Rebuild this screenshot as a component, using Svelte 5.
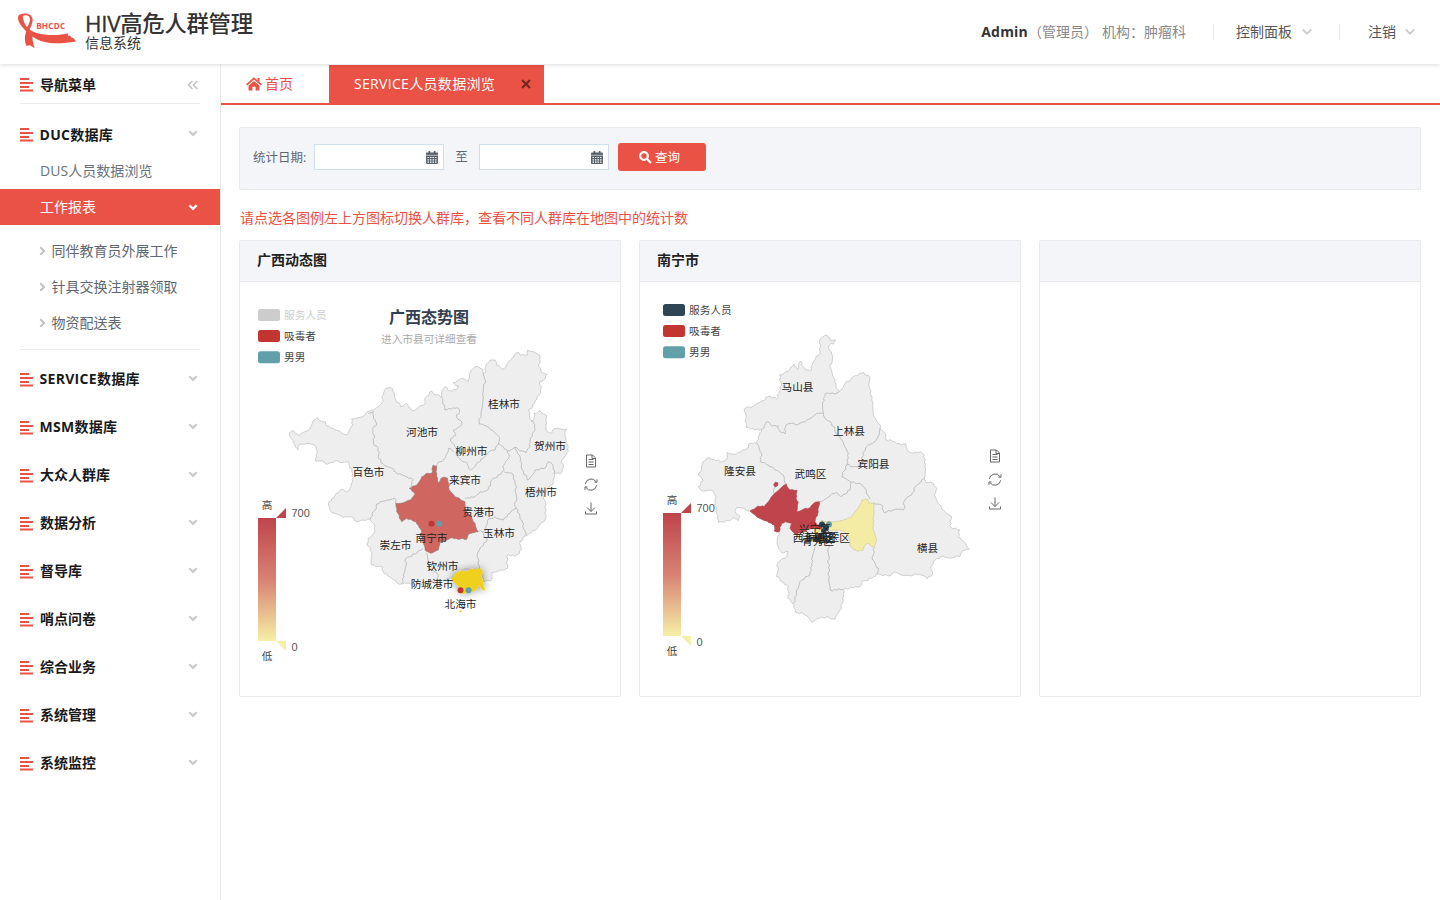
<script>
  const menus = ['SERVICE数据库', 'MSM数据库', '大众人群库', '数据分析', '督导库', '哨点问卷', '综合业务', '系统管理', '系统监控'];
  const subs = ['同伴教育员外展工作', '针具交换注射器领取', '物资配送表'];

  // Turns "x,y x,y ..." into a path whose segments wobble like a surveyed border.
  function rough(str, closed = false, amp = 1.1) {
    const pts = str.trim().split(/\s+/).map((p) => p.split(',').map(Number));
    if (closed) pts.push(pts[0]);
    let d = `M${pts[0][0]} ${pts[0][1]}`;
    for (let i = 1; i < pts.length; i++) {
      const [x0, y0] = pts[i - 1];
      const [x1, y1] = pts[i];
      const len = Math.hypot(x1 - x0, y1 - y0) || 1;
      const n = Math.max(1, Math.round(len / 2.2));
      for (let k = 1; k < n; k++) {
        const t = k / n;
        const s = Math.sin((x0 + x1) * 12.9898 + (y0 + y1) * 78.233 + k * 37.7) * 43758.5453;
        const r = (s - Math.floor(s) - 0.5) * 2 * amp;
        const x = x0 + (x1 - x0) * t - ((y1 - y0) / len) * r;
        const y = y0 + (y1 - y0) * t + ((x1 - x0) / len) * r;
        d += `L${x.toFixed(1)} ${y.toFixed(1)}`;
      }
      d += `L${x1} ${y1}`;
    }
    return closed ? d + 'Z' : d;
  }

  const guangxi = {
    view: '240 282 380 414',
    lx: 258, ly: 309, bx: 258, by: 518, tx: 591, ty: 461,
    off: true,
    outline: '289.3,433.3 291.7,430.7 299.3,436 305,431.7 310,428.3 314,420 317.3,417.3 320,420.7 325.3,421.7 327.3,426 335,430 340,431.3 346,435 351,427.3 352.7,425 351.7,419 360,417.3 366,413.3 370.7,410 377.3,407.3 382.7,401.7 381.7,398.3 386,388.3 390.3,387.3 394.3,393.3 396,400 400.7,406.7 406.7,403.3 408.3,406.7 411.7,410.7 418.3,407.3 424,405 425.7,397.3 431.7,391 435,395 440,396 442.7,399.3 441.7,392.7 445,386.7 449.3,390.7 456,390 458.3,386 453.3,382.7 461.7,378.3 468.3,381.7 469.3,376 473.3,368.3 478.3,366.7 482.7,369.3 483.3,374 486,371.7 485.7,366.7 490,360 495,360 496.7,365 502.7,369.3 507.3,363.3 511.7,358.3 516.7,352.7 521.7,355 527.3,355 527.7,350 535,352.7 539.3,355 540,361.7 538.3,366 541.7,372.7 547.3,374.3 544,379.3 540,381.7 540.7,393.3 535,400.7 532.7,406 528.3,410 530,419.3 533.3,421 534,413.3 540,410.7 546,415 546.7,422.7 546,430 551.7,433.3 555,428.7 566.7,429 565,436 566,443.3 568.3,447.3 566,455 561.7,460 563.3,467.3 560,474 554,473.3 553.3,482.7 546.7,490.7 543.3,498.3 546,505 545,520 538.3,526.7 531.7,532.3 526,535.7 520,541.7 521.7,549.3 516.7,555 506.7,556 507.3,568.3 500,570 491.7,572.7 490.7,580.7 483.3,581.7 481.7,570 466.7,569 451.7,578.3 440,580 426.7,583 413.3,585.5 406.7,583.3 397.3,583.3 390,576.7 383.3,571.7 382.7,567.3 371.7,565 370.7,548.3 366.7,545 368.3,538.3 374,533.3 375,526.7 370,519.3 363.3,520 357.3,521.7 351.7,516.7 343.3,517.7 331.7,512.7 328.3,504 335,495 341.7,489.3 346.7,491.7 351,486.7 352.7,481.7 351.7,471.7 348.3,461.7 340,462.7 335,460.7 327.3,464.3 321.7,460.7 316,461.7 316.7,450 314,445 308.3,443.3 299.3,444.3 298.3,450 293.3,442.7',
    borders: [
      '368.3,413.3 373.3,411.7 373.3,418.3 376.7,424 372.7,428.3 374,435 373.3,442.7 378.3,448.3 378.3,458.3 383.3,464 391.7,468.3 397.3,474 406.7,476.7 413.3,480 410.7,487.3',
      '370,519.3 375,510 376.7,504 386.7,500 395,498.3 396,504',
      '442.7,399.3 445,410 455,408.3 459.3,409.3 456.7,417.3 461.7,421.7 460,426.7 453.3,430 456,435 450,439.3 455,446.7 456.7,456',
      '456.7,456 465,461.7 470.7,470 476.7,463.3 483.3,458.3 488.3,452.7 495,450 498.3,444',
      '454,451.7 448.3,448.3 445,458.3 440,461.7 436,466',
      '483.3,374 485,380 483.3,396.7 481.7,410 479.3,424 488.3,426.7 495,433.3 499.3,436.7 498.3,444',
      '498.3,444 503.3,446.7 507.3,450.7 515,447.3 520,450.7 526,452.7 530,446.7 530,440 534,431.7 535,425 531,420.7',
      '465,498.3 475,496.7 480,491.7 488.3,489.3 491.7,480 501.7,472.7 505,463.3 509.3,456.7 507.3,450.7',
      '504,471.7 512.7,474 515,483.3 516.7,496.7 515,506.7 516.7,508.3',
      '515,447.3 520,456.7 522.7,470 527.3,480 535,470 545,468.3 548.3,461.7 553.3,466.7 554,473.3',
      '516.7,508.3 510,513.3 503.3,520 495,516.7 487.3,520.7 486,530 478.3,531.7',
      '516.7,508.3 521.7,520 526,535',
      '481.7,531.7 487.3,540 480,548.3 477.3,556.7 479.3,569',
      '426.7,553.3 428.3,566.7 437.3,573.3 438.3,580',
      '401.7,583.3 405,570 406,558.3 415,554 422.7,548.3'
    ],
    areas: [
      { c: '#d06660', s: '#8f7a78', p: '433,465 436.7,466 436,471.7 438.3,482.7 442.7,477.3 447.7,478.3 449.3,490 455,496.7 465,501.7 466,510 471.7,517.3 475,523.3 478.3,531.7 468.3,534.3 466.7,539.3 450,538.3 440,542.7 438.3,550 430.7,553.3 425,550 422.7,541.7 421.7,531.7 416,521.7 406.7,518.3 401.7,521.7 396.7,511.7 396,503.3 403.3,502.7 410.7,500 415,494 409.3,488.3 416.7,485 421.7,476.7 426.7,473.3 431.7,473.3' },
      { c: '#efd01f', s: '#f2d21a', glow: true, p: '451.7,578.3 455,574 461.7,570.7 466.7,571.5 471.7,569 481.7,569.3 481.7,578.3 485,590 481.7,589.3 478.3,585 475,590.7 468.3,591.7 461.7,594 459.3,586.7 453.3,581.7' },
      { c: '#efd01f', s: '#efd01f', p: '459.4,611.8 461.4,610 461,612.2' }
    ],
    dots: [[431.5, 523.8, 3, '#c23531'], [439.2, 523.8, 3, '#61a0a8'], [460.5, 590.2, 3, '#c23531'], [468.5, 590.2, 3, '#61a0a8']],
    labels: [['桂林市', 504, 404.5], ['河池市', 422, 432.5], ['柳州市', 471.5, 451.5], ['贺州市', 550, 446.5], ['百色市', 368.5, 472], ['来宾市', 465, 480], ['梧州市', 541, 492.5], ['贵港市', 478.5, 512], ['玉林市', 499, 533.5], ['南宁市', 431.5, 538], ['崇左市', 395.5, 545], ['钦州市', 442.5, 566.5], ['防城港市', 432, 584], ['北海市', 460.5, 604]]
  };

  const nanning = {
    view: '640 282 380 414',
    lx: 663, ly: 304, bx: 663, by: 513, tx: 995, ty: 456,
    off: false,
    outline: '826.7,335 830,340 836,340.7 833.3,344 829.3,345 829.3,350 832.7,356.7 830,367.3 834,378.3 836.7,388.3 839.3,391.7 844,385 853.3,376.7 864,372.7 870,377.3 869.3,386.7 871.7,400 873.3,413.3 879.3,424 880,428.3 885,433.3 886,440 895,441.7 901.7,445 906,444 907.3,450 913.3,453.3 920,451.7 924,455 925,466.7 924.3,478.3 926,482.7 933.3,483.3 936.7,488.3 934.3,495 940,505 945,511.7 951.7,516.7 950,521.7 950.7,527.3 960,530 958.3,536.7 964,541.7 969.3,549 961.7,551.7 960,556.7 950,558.3 943.3,556 935,560 930.7,568.3 932.7,574 927.3,579 921.7,575 913.3,575 905,575.7 895,571.7 890,576 878.3,574 871.7,578.3 861.7,581.7 860,586.7 851.7,587.3 843.3,590 843.3,600 840,610 835,619 826.7,616.7 817.3,618.3 811.7,622.3 805,615 795,611.7 792.7,603.3 788.3,598.3 788.3,586.7 776.7,576.7 778.3,561.7 786.7,556.7 788.3,551.7 781.7,552.7 778.3,546.7 777.3,538.3 780,530 775,531 773.3,523.3 765,520.7 756.7,516.7 750,511 744,508.3 736.7,507.7 735,511.7 740,516.7 738.3,520.7 733.3,517.3 728.3,520.7 718.3,522.3 716,510 716,496.7 712.7,490.7 701.7,490.7 698.3,486.7 703.3,480.7 698.3,475 701.7,470 703.3,461.7 708.3,457.7 720,461.7 726.7,459.3 727.3,452.3 736.7,454 746.7,448.3 750,443.3 757.3,444 758.3,436.7 761.7,429.3 755,430 746,427.3 746,418.3 744,409.3 755,405 759.3,402.7 770,396 776.7,399.3 779.3,391.7 781.7,383.3 779.3,375 788.3,371.7 794,364 797.3,369.3 800.7,361 805,370 811.7,370 813.3,361.7 820,353.3 820,340',
    borders: [
      '761.7,429.3 766.7,421.7 771.7,426 778.3,426 780,431.7 785,434 786,425 800,423.3 806.7,420 813.3,416 818.3,413.3 823.3,413.3',
      '823.3,413.3 822.7,405 825,394 836.7,393.3 839.3,391.7',
      '823.3,413.3 826.7,420 831.7,423.3 836.7,433.3 841.7,440 846,448.3 848.3,453.3 846.7,465',
      '846.7,465 853.3,466.7 861.7,465 862.7,453.3 868.3,445 875,441.7 879.3,433.3 880,428.3',
      '846.7,465 841.7,477 851.7,482.3 860,483.3 865,488.3 870,499',
      '850.7,482.3 850,490 841.7,496.7 836.7,492.3 830,496 819.3,501.7',
      '873.3,502.7 881.7,505 884,512.7 893.3,510 903.3,510 905,500 911.7,495 915,486.7 921.7,480 924.3,478.3',
      '757.3,444 761.7,453.3 760,461.7 768.3,465 775,470 783.3,475 786,484',
      '775,487 774.3,494.3',
      '874.3,547.7 872.7,560 878.3,568.3 877,574',
      '828.3,545 828.3,563.3 829.3,576.7 830,590 843.3,589.5',
      '815,546.7 811.7,563.3 810,575 801.7,580 796.7,590 795,601.7 792.7,603.3'
    ],
    areas: [
      { c: '#bf444c', s: '#a8444a', p: '750,511 758.3,506 764,506.7 770,499.3 776.7,491.7 786.3,484 790,490 796.7,490 796,498.3 798.3,502 796.7,511.7 803.3,509.3 810,507.7 815,502.3 819.3,501.7 818.3,511.7 815,521.7 817,526 803.3,531.7 795,534 790,528.3 791.7,523.3 785,521.7 781.7,523.3 779.3,531.7 774.3,531 774.3,525 765,520.7 756.7,516.7' },
      { c: '#bf444c', s: '#a8444a', p: '773.6,484.5 775.5,482 778,483 777.5,485.8 775,487' },
      { c: '#f4eba4', s: '#c9c39c', p: '821.7,520 826.7,521.7 838.3,521.7 851.7,516.7 858.3,508.3 861.7,500 867.3,499.3 869.3,503.3 874.3,503.3 873.3,516.7 873.3,530 876.7,539.3 874.3,547.7 868.3,543.3 865,545 862.7,550.7 856.7,550.7 850.7,546.7 848.3,535 843.3,530.7 833.3,530 820,531' }
    ],
    dots: [[813, 525, 3, '#c23531'], [818, 527.5, 3, '#c23531'], [817.5, 531, 2.5, '#e9e194'], [829, 524.6, 3, '#61a0a8'], [822, 524.5, 3, '#2f4554'], [826, 527.8, 3, '#2f4554'], [824, 530.5, 2.5, '#2f4554']],
    labels: [['马山县', 797.5, 387], ['上林县', 849, 431], ['宾阳县', 873.5, 464], ['武鸣区', 810.5, 474], ['隆安县', 740, 471.5], ['横县', 927.5, 548], ['兴宁区', 815, 529.5], ['西乡塘区', 814, 538], ['江南区', 817, 537], ['良庆区', 823, 537.5], ['青秀区', 818, 541.5], ['邕宁区', 834, 538]]
  };
</script>

{#snippet bars()}
  <svg class="bars" viewBox="0 0 13 13"><path d="M0 1h9M0 5h13M0 9h9M0 12.500h13" /></svg>
{/snippet}

{#snippet chev(cls)}
  <svg class="chev {cls}" viewBox="0 0 10 7"><path d="M1.3 1.3 5 4.9 8.7 1.3" /></svg>
{/snippet}

{#snippet calendar()}
  <svg class="cal" viewBox="0 0 12 13">
    <path fill="#5a626c" d="M1 1.600h10q1 0 1 1V12q0 .9-.9.9H.9Q0 12.900 0 12V2.600q0-1 1-1zM2.500 0h1.700v2.200H2.500zM7.800 0h1.700v2.200H7.800z" />
    <path stroke="#fff" stroke-width=".6" d="M0 4.300h12" />
    <path fill="#fff" d="M1.500 5.900h1.500v1.200H1.500zM4 5.900h1.500v1.200H4zM6.500 5.900h1.500v1.200H6.500zM9 5.900h1.500v1.200H9zM1.500 8.200h1.500v1.200H1.500zM4 8.200h1.500v1.200H4zM6.500 8.200h1.500v1.200H6.500zM9 8.200h1.500v1.200H9zM1.500 10.500h1.500v1.200H1.500zM4 10.500h1.500v1.200H4zM6.500 10.500h1.500v1.200H6.500zM9 10.500h1.500v1.200H9z" />
  </svg>
{/snippet}

{#snippet chart(m, id)}
  <svg class="chart" viewBox={m.view} width="380" height="414">
    <defs>
      <linearGradient id="ramp-{id}" x1="0" y1="0" x2="0" y2="1">
        <stop offset="0" stop-color="#bf444c" />
        <stop offset=".5" stop-color="#d88273" />
        <stop offset="1" stop-color="#f6efa6" />
      </linearGradient>
      <filter id="glow-{id}" x="-50%" y="-50%" width="200%" height="200%">
        <feDropShadow dx="0" dy="0" stdDeviation="4.500" flood-color="#000" flood-opacity=".45" />
      </filter>
    </defs>
    <path d={rough(m.outline, true)} fill="#eee" stroke="#c4c4c4" stroke-width=".8" />
    {#each m.borders as b}
      <path d={rough(b)} fill="none" stroke="#b4b4b4" stroke-width=".8" />
    {/each}
    {#each m.areas as a}
      <path d={rough(a.p, true, 0.7)} fill={a.c} stroke={a.s} stroke-width=".6" filter={a.glow ? `url(#glow-${id})` : undefined} />
    {/each}
    {#each m.dots as [x, y, r, c]}
      <circle cx={x} cy={y} {r} fill={c} />
    {/each}
    {#each m.labels as [t, x, y]}
      <text class="place" {x} y={y + 3.9}>{t}</text>
    {/each}

    {#each ['服务人员', '吸毒者', '男男'] as t, i}
      <rect x={m.lx} y={m.ly + i * 21.1} width="22" height="12" rx="2.500" fill={i === 0 ? (m.off ? '#ccc' : '#2f4554') : i === 1 ? '#c23531' : '#61a0a8'} />
      <text class="small" x={m.lx + 26} y={m.ly + i * 21.1 + 10} fill={i === 0 && m.off ? '#ccc' : '#444'}>{t}</text>
    {/each}

    {#if m.off}
      <text class="title" x="429" y="323">广西态势图</text>
      <text class="small mid" x="429" y="343" fill="#aaa">进入市县可详细查看</text>
    {/if}

    <rect x={m.bx} y={m.by} width="18" height="123" fill="url(#ramp-{id})" />
    <path d="M{m.bx + 18} {m.by}l10-10v10z" fill="#bf444c" />
    <path d="M{m.bx + 18} {m.by + 123}h10v10z" fill="#f6efa6" />
    <text class="small mid" x={m.bx + 9} y={m.by - 9.5} fill="#444">高</text>
    <text class="small mid" x={m.bx + 9} y={m.by + 142} fill="#444">低</text>
    <text class="num" x={m.bx + 33.5} y={m.by - 0.8}>700</text>
    <text class="num" x={m.bx + 33.5} y={m.by + 133}>0</text>

    <g fill="none" stroke="#666" stroke-width="1" transform="translate({m.tx} {m.ty})">
      <path d="M-4.500-6h6L4.500-3v9h-9zM1-6v3.500h3.500M-2.500-1.500h5M-2.500 1h5M-2.500 3.500h5" />
      <path d="M-5.700 22.900A5.900 5.900 0 0 1 5.100 20.700M5.700 24.300A5.900 5.900 0 0 1-5.100 26.500M6 18.300V21.200H3.500M-6 28.900V26H-3.500" />
      <path d="M0 41.500v9M-4 46.500l4 4 4-4M-5.500 50.500v2.500h11v-2.500" />
    </g>
  </svg>
{/snippet}

<div class="page">
  <header>
    <svg class="logo" viewBox="0 0 62 38">
      <path fill="#e95245" fill-rule="evenodd" d="M1 5.200C1.500 3.500 2 3 3 2.600 5 1.600 7 1.400 9 1.600c4 .4 6.300 2.700 6.600 5.500.3 3.700-1.300 7-3 10.100 2 1.600 4.400 3 7 3.700C29 23.400 42 23.800 51.300 21.200l-.6 2.500 2.300-.2 1.500 2.200 1.800.3 2.900 3.600C48 31.400 40 31.800 33 30.900c-7-.9-13.200-3-17.700-6.400.2 4 .9 8 2.500 11.700L13 33.200l-3.800.6C8 30 7.600 27 8 24.500L9 19C5 14.500 1 11 1 5.200zM5.800 4C6 8 7.500 12 10 15.300c2-3.300 3.300-6.300 2.900-8.800C12.400 3.500 9 2.500 5.800 4z" />
      <text x="19.200" y="16.500">BHCDC</text>
    </svg>
    <div class="brand">
      <h1><span>HIV</span>高危人群管理</h1>
      <p>信息系统</p>
    </div>
    <div class="user"><b>Admin</b><span class="role">（管理员）</span><span>机构：肿瘤科</span></div>
    <div class="tool panel-link">控制面板{@render chev('wide')}</div>
    <div class="tool logout">注销{@render chev('wide')}</div>
  </header>

  <div class="body">
    <aside>
      <div class="nav-title">
        {@render bars()}<b>导航菜单</b>
        <svg class="collapse" viewBox="0 0 12 10"><path d="M5.500 1 1.500 5l4 4M10.500 1l-4 4 4 4" /></svg>
      </div>
      <div class="group first">{@render bars()}<b class="latin">DUC数据库</b>{@render chev('')}</div>
      <div class="item">DUS人员数据浏览</div>
      <div class="item on">工作报表{@render chev('white')}</div>
      <div class="subs">
        {#each subs as s}
          <div class="sub"><svg viewBox="0 0 7 10"><path d="M1.300 1.300 5 5 1.300 8.700" /></svg>{s}</div>
        {/each}
      </div>
      <div class="groups">
        {#each menus as m}
          <div class="group">{@render bars()}<b class:latin={/^[A-Z]/.test(m)}>{m}</b>{@render chev('')}</div>
        {/each}
      </div>
    </aside>

    <main>
      <nav>
        <div class="home">
          <svg viewBox="0 0 16 14"><path fill="#e95245" d="M8 4 13.500 8.800V13q0 .6-.6.6H9.600V9.800H6.400v3.800H3.100q-.6 0-.6-.6V8.800z" /><path fill="none" stroke="#e95245" stroke-width="1.700" d="M.6 7.800 8 1.300l7.400 6.500" /><path fill="#e95245" d="M11.500 1h2v4l-2-1.800z" /></svg>
          首页
        </div>
        <div class="tab">SERVICE人员数据浏览<svg viewBox="0 0 10 10"><path d="M1 1l8 8M9 1 1 9" /></svg></div>
      </nav>

      <div class="content">
        <section class="filter">
          <span class="label">统计日期:</span>
          <div class="field">{@render calendar()}</div>
          <span class="to">至</span>
          <div class="field">{@render calendar()}</div>
          <button><svg viewBox="0 0 13 13"><circle cx="5" cy="5" r="3.800" /><path d="M8 8l4 4" /></svg><em>查询</em></button>
        </section>
        <p class="hint">请点选各图例左上方图标切换人群库，查看不同人群库在地图中的统计数</p>
        <div class="cards">
          <article><h2>广西动态图</h2>{@render chart(guangxi, 'gx')}</article>
          <article><h2>南宁市</h2>{@render chart(nanning, 'nn')}</article>
          <article><h2></h2></article>
        </div>
      </div>
    </main>
  </div>
</div>

<style>
  :global(body) { background: #fff; }
  .page {
    width: 1440px; height: 900px; overflow: hidden;
    display: flex; flex-direction: column;
    font: 14px/20px "Open Sans", "Noto Sans CJK SC", sans-serif;
    color: #5f6771; box-sizing: border-box;
  }
  .page :global(*) { box-sizing: border-box; }
  h1, h2, p { margin: 0; }
  svg { display: block; flex: none; }

  header {
    height: 64px; flex: none; display: flex; align-items: center;
    padding: 0 24px 0 17px; background: #fff; position: relative;
    box-shadow: 0 1px 4px rgba(0, 0, 0, .14);
  }
  .logo { width: 62px; height: 38px; margin: -3px 6px 0 0; }
  .logo text { font: 700 8px "Open Sans", sans-serif; fill: #e95245; letter-spacing: .3px; }
  .brand { color: #333; padding-top: 2px; }
  h1 { font-size: 22.400px; line-height: 24px; font-weight: 500; white-space: nowrap; letter-spacing: -.3px; margin-top: -4px; }
  h1 span { -webkit-text-stroke: .35px #333; }
  .brand p { line-height: 15px; margin-top: -1px; }
  .user { margin-left: auto; display: flex; color: #888; }
  .user b { color: #333; font-weight: 700; letter-spacing: .2px; }
  .role { margin-right: 4px; }
  .tool { display: flex; align-items: center; color: #555; position: relative; }
  .tool::before { content: ''; width: 1px; height: 16px; background: #e8e8e8; }
  .panel-link { margin-left: 27px; }
  .panel-link::before { margin-right: 22px; }
  .logout { margin-left: 26px; }
  .logout::before { margin-right: 28px; }
  .chev { width: 10px; height: 7px; fill: none; stroke: #ccc; stroke-width: 2.300; }
  .chev.wide { width: 12px; height: 8px; margin-left: 9px; stroke-width: 1.600; }
  .logout .chev.wide { margin-left: 8px; }
  .chev.white { stroke: #fff; }

  .body { flex: 1; display: flex; min-height: 0; }
  aside { width: 221px; flex: none; border-right: 1px solid #e8eaec; }
  .bars { width: 13px; height: 13px; margin-right: 7px; fill: none; stroke: #e95245; stroke-width: 2; overflow: visible; }
  aside b { color: #1a1a1a; font-weight: 700; }
  aside b.latin { letter-spacing: .3px; margin-left: -.5px; }
  .nav-title { height: 40px; margin: 0 20px; border-bottom: 1px solid #eaeaea; display: flex; align-items: center; padding-top: 2px; }
  .collapse { width: 12px; height: 10px; margin-left: auto; margin-right: 1px; fill: none; stroke: #c4c4c4; stroke-width: 1.600; }
  .group { height: 48px; display: flex; align-items: center; padding: 0 22px 0 20px; }
  .group .chev { margin-left: auto; margin-top: -2px; }
  .group.first { height: 37px; margin-top: 12px; }
  .item { height: 36px; padding: 0 22px 0 40px; display: flex; align-items: center; color: #6b727b; letter-spacing: .05px; }
  .item.on { background: #e95245; color: #fff; letter-spacing: 0; }
  .item .chev { margin-left: auto; }
  .subs { margin: 0 20px; padding: 8px 0 8px 19px; height: 125px; border-bottom: 1px solid #eaeaea; }
  .sub { height: 36px; display: flex; align-items: center; color: #5f6771; }
  .sub svg { width: 7px; height: 10px; margin-right: 5.500px; fill: none; stroke: #c4c4c4; stroke-width: 2.200; }
  .groups { padding-top: 5px; }

  main { flex: 1; min-width: 0; }
  nav { height: 41px; padding-top: 1px; border-bottom: 2px solid #e95245; display: flex; }
  .home { width: 108px; padding-left: 25px; display: flex; align-items: center; color: #e95245; }
  .home svg { width: 16px; height: 14px; margin-right: 3px; }
  .tab { width: 215px; padding: 0 13px 0 25px; background: #e95245; color: #fff; display: flex; align-items: center; justify-content: space-between; white-space: nowrap; letter-spacing: .32px; }
  .tab svg { width: 10px; height: 10px; stroke: #74261f; stroke-width: 2.100; }

  .content { padding: 22px 19px 0 18px; }
  .filter { height: 63px; border: 1px solid #e8eaec; border-radius: 2px; background: #f4f5f8; display: flex; align-items: flex-start; padding: 15px 14px 15px 13px; font-size: 12.500px; color: #5f6771; }
  .filter span { line-height: 28px; white-space: nowrap; }
  .filter .label { width: 61px; padding-top: 1px; }
  .filter .to { width: 35px; text-align: center; }
  .field { width: 130px; height: 26px; margin-top: 1px; background: #fff; border: 1px solid #cfdfec; display: flex; align-items: center; justify-content: flex-end; padding-right: 5px; }
  .cal { width: 12px; height: 13px; }
  button { width: 88px; height: 28px; margin: 0 0 0 9px; padding: 0 5px 0 0; border: 0; border-radius: 3px; background: #e95245; color: #fff; font: 12.500px "Open Sans", "Noto Sans CJK SC", sans-serif; display: flex; align-items: center; justify-content: center; }
  button em { font-style: normal; margin-top: -2px; }
  button svg { width: 13px; height: 13px; margin-right: 3px; fill: none; stroke: #fff; stroke-width: 2.200; }
  .hint { color: #e95245; margin: 18px 0 12px 1px; }
  .cards { display: grid; grid-template-columns: repeat(3, 382px); gap: 18px; }
  article { height: 457px; border: 1px solid #e8eaec; border-radius: 2px; }
  h2 { height: 41px; background: #f4f5f8; border-bottom: 1px solid #e8eaec; font-size: 14px; line-height: 37px; font-weight: 700; color: #222; padding-left: 17px; }
  .chart { font-family: "Noto Sans CJK SC", sans-serif; }
  .place { font-size: 10.670px; fill: #222; text-anchor: middle; }
  .small { font-size: 10.670px; }
  .mid { text-anchor: middle; }
  .title { font-size: 16px; font-weight: 700; fill: #333f50; text-anchor: middle; }
  .num { font: 11px "Liberation Sans", sans-serif; fill: #555; }
</style>
